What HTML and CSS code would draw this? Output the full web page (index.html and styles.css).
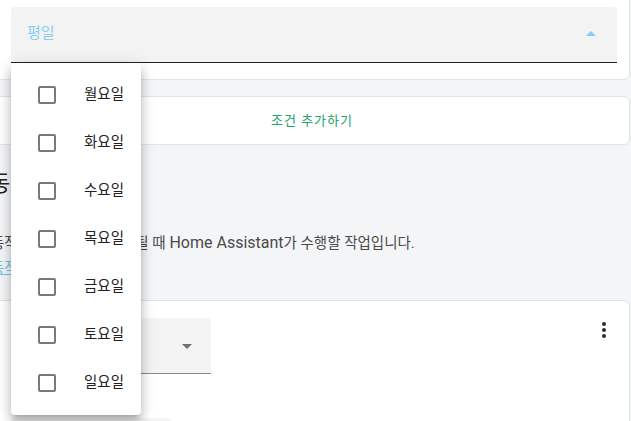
FILE: index.html
```html
<!DOCTYPE html>
<html lang="ko">
<head>
<meta charset="utf-8">
<title>Automation editor</title>
<link rel="stylesheet" href="styles.css">
</head>
<body>
<div class="page">
  <div class="card card-cond">
    <div class="select select-wide">
      <span class="select-label">평일</span>
      <span class="arrow arrow-up"></span>
    </div>
  </div>
  <div class="card card-add">
    <span class="add-btn">조건 추가하기</span>
  </div>
  <div class="section-head">
    <h2 class="section-title">동작</h2>
    <p class="section-desc"><span class="ko">동작은 자동화가 트리거 될 때</span> Home Assistant<span class="ko">가 수행할 작업입니다.</span></p>
    <a class="section-link" href="#"><span class="ko">동작에 대해 더 알아보기</span></a>
  </div>
  <div class="card card-action">
    <div class="action-row">
      <div class="select select-small">
        <span class="arrow arrow-down"></span>
      </div>
      <button class="more-btn" type="button" aria-label="more">
        <svg viewBox="0 0 24 24" width="24" height="24"><path d="M12,16A2,2 0 0,1 14,18A2,2 0 0,1 12,20A2,2 0 0,1 10,18A2,2 0 0,1 12,16M12,10A2,2 0 0,1 14,12A2,2 0 0,1 12,14A2,2 0 0,1 10,12A2,2 0 0,1 12,10M12,4A2,2 0 0,1 14,6A2,2 0 0,1 12,8A2,2 0 0,1 10,6A2,2 0 0,1 12,4Z"/></svg>
      </button>
    </div>
    <div class="next-field"></div>
  </div>
</div>

<ul class="menu">
  <li class="menu-item"><span class="check"></span><span class="item-text">월요일</span></li>
  <li class="menu-item"><span class="check"></span><span class="item-text">화요일</span></li>
  <li class="menu-item"><span class="check"></span><span class="item-text">수요일</span></li>
  <li class="menu-item"><span class="check"></span><span class="item-text">목요일</span></li>
  <li class="menu-item"><span class="check"></span><span class="item-text">금요일</span></li>
  <li class="menu-item"><span class="check"></span><span class="item-text">토요일</span></li>
  <li class="menu-item"><span class="check"></span><span class="item-text">일요일</span></li>
</ul>
</body>
</html>
```

FILE: styles.css
```css
* { box-sizing: border-box; }

html, body {
  margin: 0;
  padding: 0;
}

body {
  width: 631px;
  height: 421px;
  overflow: hidden;
  position: relative;
  background: #f4f5f7;
  font-family: Roboto, "Noto Sans CJK KR", sans-serif;
  font-size: 14px;
  color: #222;
}

.page {
  width: 636px;
  margin-left: -6px;
  margin-top: -20px;
}

.card {
  background: #fff;
  border: 1px solid #e2e3e5;
  border-radius: 6px;
}

.card-cond {
  padding: 26px 12px 16px 16px;
}

.select {
  position: relative;
  height: 56px;
  background: #f3f3f3;
  border-radius: 4px 4px 0 0;
  border-bottom: 1px solid #222;
  display: flex;
  align-items: center;
}

.select-wide {
  padding: 0 16px;
}

.select-label {
  color: #86cdf3;
  font-size: 15px;
  line-height: 20px;
  margin-top: -3px;
}

.arrow {
  width: 0;
  height: 0;
  border-left: 5px solid transparent;
  border-right: 5px solid transparent;
}

.arrow-up {
  margin-left: auto;
  margin-right: 5px;
  margin-top: -3px;
  border-bottom: 5px solid #86cdf3;
}

.card-add {
  margin-top: 16px;
  height: 49px;
  display: flex;
  align-items: center;
  justify-content: center;
}

.add-btn {
  color: #22a36b;
  font-size: 13px;
  letter-spacing: 1px;
  line-height: 20px;
}

.section-head {
  margin-left: -3px;
  padding-top: 25px;
}

.section-title {
  margin: 0 0 0 -1px;
  font-size: 22px;
  line-height: 28px;
  font-weight: 400;
  color: #222;
}

.section-desc {
  margin: 35px 0 0;
  height: 20px;
  font-size: 16px;
  line-height: 20px;
  color: #4a4a4a;
}

.ko {
  font-size: 14.5px;
  line-height: 14px;
}

.section-link {
  display: block;
  height: 20px;
  margin-top: 5px;
  font-size: 16px;
  line-height: 20px;
  color: #6cc3ee;
  text-decoration: underline;
}

.card-action {
  margin-top: 22px;
  padding: 17px 1px 0 16px;
  height: 200px;
  border-radius: 6px 6px 0 0;
}

.action-row {
  display: flex;
  justify-content: space-between;
  align-items: flex-start;
}

.select-small {
  width: 200px;
  border-bottom-color: #8a8a8a;
  justify-content: flex-end;
  padding-right: 19px;
}

.arrow-down {
  border-top: 5px solid #6f6f6f;
  margin-top: 1px;
}

.more-btn {
  width: 48px;
  height: 48px;
  margin-top: -12px;
  padding: 0;
  border: 0;
  background: transparent;
  display: flex;
  align-items: center;
  justify-content: center;
}

.more-btn svg {
  fill: #2b2b2b;
}

.next-field {
  margin-top: 44px;
  width: 160px;
  height: 40px;
  background: #f3f3f3;
  border-radius: 4px 4px 0 0;
}

.menu {
  position: absolute;
  left: 11px;
  top: 63px;
  width: 130px;
  margin: 0;
  padding: 8px 0;
  list-style: none;
  background: #fff;
  border-radius: 4px;
  box-shadow: 0 5px 5px -3px rgba(0,0,0,.2), 0 8px 10px 1px rgba(0,0,0,.14), 0 3px 14px 2px rgba(0,0,0,.12);
}

.menu-item {
  height: 48px;
  display: flex;
  align-items: center;
  padding-left: 27px;
}

.check {
  width: 18px;
  height: 18px;
  border: 2px solid #7a7a7a;
  border-radius: 2px;
  flex: none;
}

.item-text {
  margin-left: 28px;
  font-size: 14.5px;
  line-height: 20px;
  color: #222;
}
```
